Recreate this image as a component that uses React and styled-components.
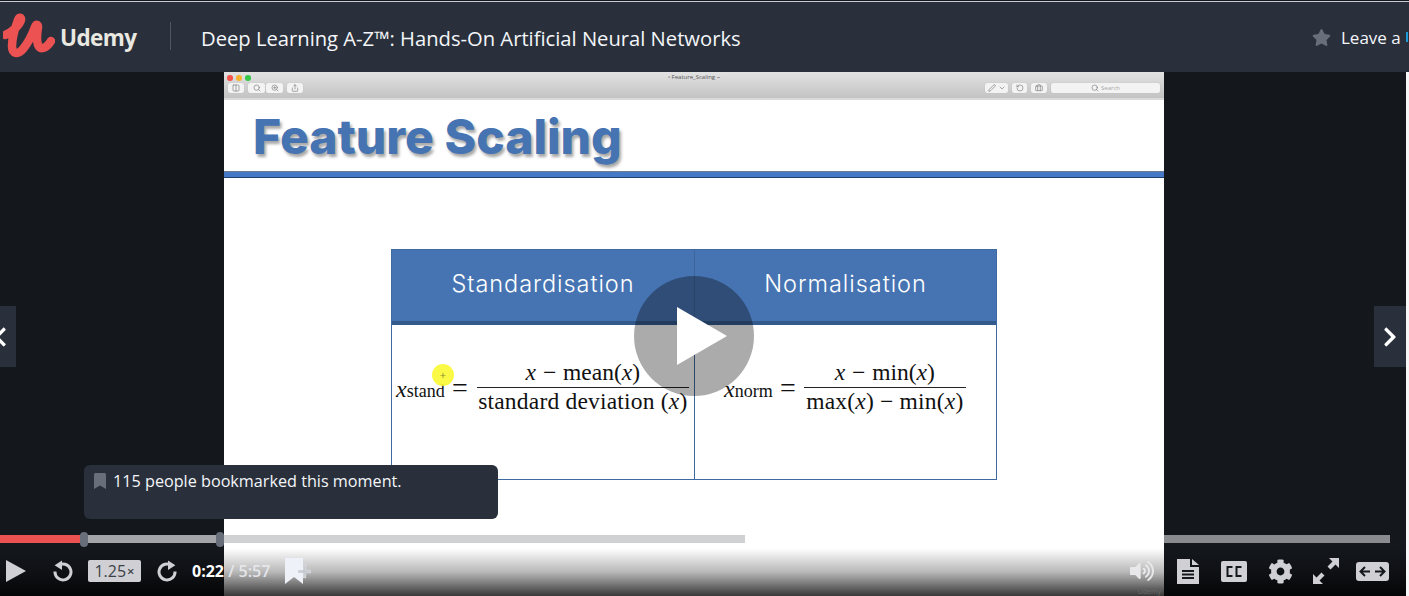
import React from 'react';
import styled, { createGlobalStyle } from 'styled-components';
import { FaStar, FaChevronLeft, FaChevronRight, FaBookmark, FaCog, FaVolumeUp } from 'react-icons/fa';
import { Search, ZoomIn, Share, Pen, Columns2, Briefcase, RotateCcw, ChevronDown } from 'lucide-react';

const GlobalStyle = createGlobalStyle`
  html, body {
    margin: 0;
    padding: 0;
    width: 1409px;
    height: 596px;
    overflow: hidden;
    background: #14171c;
    font-family: "Open Sans", "Liberation Sans", sans-serif;
  }
  * { box-sizing: border-box; }
`;

const Page = styled.div`
  width: 1409px;
  height: 596px;
  display: flex;
  flex-direction: column;
  overflow: hidden;
`;

const Header = styled.header`
  height: 72px;
  flex: none;
  background: #29303b;
  border-top: 1px solid #14171c;
  display: flex;
  flex-direction: column;
  overflow: hidden;
`;

const TopLine = styled.div`
  height: 1px;
  flex: none;
  background: #c8cad8;
`;

const HeaderRow = styled.div`
  flex: 1;
  display: flex;
  align-items: center;
  padding-left: 3px;
  padding-top: 2px;
  white-space: nowrap;
  > * { flex: none; }
`;

const LogoMark = styled.svg`
  margin-top: -4px;
`;

const LogoWord = styled.span`
  font-family: "Open Sans", sans-serif;
  font-weight: 700;
  font-size: 22.500px;
  letter-spacing: -0.6px;
  color: #e9e8e1;
  margin: -2px 0 0 5px;
  width: 110px;
`;

const Divider = styled.div`
  width: 1px;
  height: 28px;
  margin-top: -4px;
  background: #4f5662;
`;

const CourseTitle = styled.div`
  font-size: 20.200px;
  color: #f4f6fa;
  margin-left: 30px;
  width: 1111px;
`;

const Rate = styled.div`
  display: flex;
  align-items: center;
  font-size: 17px;
  color: #f4f6fa;
  gap: 10px;
  margin-top: -2px;
  svg { color: #686f7a; width: 19px; height: 19px; }
`;

const RateEdge = styled.span`
  width: 2px;
  height: 10px;
  margin-left: -5px;
  background: #1d9ad6;
`;

const Stage = styled.main`
  position: relative;
  flex: 1;
  display: flex;
  min-height: 0;
`;

const Video = styled.div`
  flex: 1;
  background: #14171c;
  padding-left: 224px;
`;

const EdgeStrip = styled.div`
  width: 3px;
  background: #f6f7f6;
`;

const Slide = styled.section`
  width: 940px;
  height: 100%;
  background: #fff;
  display: flex;
  flex-direction: column;
`;

const MacBar = styled.div`
  height: 28px;
  flex: none;
  background: linear-gradient(#e2e2e2, #c3c3c3);
  border-bottom: 2px solid #dadada;
  position: relative;
  display: flex;
  align-items: flex-end;
  justify-content: space-between;
  padding: 0 4px 5px 4px;
`;

const Lights = styled.div`
  position: absolute;
  left: 3px;
  top: 3px;
  display: flex;
  gap: 3.500px;
`;

const Light = styled.span`
  width: 5.500px;
  height: 5.500px;
  border-radius: 50%;
  background: ${p => p.$color};
`;

const MacTitle = styled.div`
  position: absolute;
  left: 0;
  right: 0;
  top: 1px;
  text-align: center;
  font-size: 6px;
  line-height: 8px;
  color: #555;
`;

const MacGroup = styled.div`
  display: flex;
`;

const MacButton = styled.div`
  width: ${p => p.$w}px;
  height: 10px;
  margin-left: ${p => p.$gap || 0}px;
  background: #f3f3f3;
  border-radius: 2px;
  box-shadow: 0 0 1px #aaa;
  display: flex;
  align-items: center;
  justify-content: center;
  gap: 2px;
  font-size: 6px;
  color: #a6a6a6;
  svg { width: 8px; height: 8px; color: #7d7d7d; }
`;

const SlideHead = styled.div`
  height: 78px;
  flex: none;
  padding-left: 29px;
  display: flex;
  align-items: center;
  border-bottom: 6px solid #4579c6;
  position: relative;
  &::before {
    content: '';
    position: absolute;
    left: 0; right: 0; bottom: 0;
    height: 1px;
    background: #6d7c92;
  }
  &::after {
    content: '';
    position: absolute;
    left: 0; right: 0; bottom: -6px;
    height: 1px;
    background: #1f3f72;
  }
`;

const SlideTitle = styled.h1`
  margin: 0;
  font-family: Inter, "Open Sans", sans-serif;
  font-weight: 800;
  font-size: 48px;
  color: #4674b2;
  text-shadow: 2px 3px 3px rgba(0, 0, 0, 0.35);
`;

const SlideBody = styled.div`
  padding: 71px 0 0 167px;
`;

const Table = styled.div`
  width: 606px;
  height: 231px;
  display: grid;
  grid-template-columns: 302px 302px;
  grid-template-rows: 75px 154px;
  border: 1px solid #3f6a9f;
`;

const HeadCell = styled.div`
  background: #4674b2;
  border-bottom: 4px solid #335a8c;
  border-left: ${p => (p.$divided ? '1px solid #3c6699' : 'none')};
  color: #fff;
  font-family: Inter, "Open Sans", sans-serif;
  font-weight: 300;
  font-size: 23.500px;
  letter-spacing: 0.95px;
  display: flex;
  align-items: center;
  justify-content: center;
  padding-bottom: 4px;
`;

const FormulaCell = styled.div`
  border-left: ${p => (p.$divided ? '1px solid #3f6a9f' : 'none')};
  display: flex;
  align-items: flex-start;
  padding: 34px 0 0 ${p => p.$pad}px;
  font-family: "Liberation Serif", serif;
  font-size: 23.500px;
  color: #111;
  white-space: nowrap;
`;

const Lhs = styled.div`
  display: flex;
  align-items: baseline;
  padding-top: 17px;
  width: ${p => p.$w}px;
  i { font-size: 24px; }
  sub { font-size: 18px; vertical-align: -5px; line-height: 0; }
`;

const Equals = styled.span`
  font-size: 28px;
  line-height: 28px;
  margin: 15px ${p => p.$after}px 0 ${p => p.$before}px;
`;

const Fraction = styled.div`
  display: flex;
  flex-direction: column;
  align-items: center;
  width: ${p => p.$w}px;
  line-height: 27px;
`;

const Numerator = styled.div`
  border-bottom: 1px solid #222;
  width: 100%;
  text-align: center;
  height: 29px;
  word-spacing: 1px;
`;

const Denominator = styled.div`
  letter-spacing: 0.2px;
`;

const CursorSpot = styled.div`
  position: absolute;
  left: 432px;
  top: 292px;
  width: 22px;
  height: 22px;
  border-radius: 50%;
  background: rgba(250, 250, 50, 0.9);
  color: #8a8a30;
  font-size: 11px;
  line-height: 21px;
  text-align: center;
`;

const BigPlay = styled.div`
  position: absolute;
  left: 634px;
  top: 204px;
  width: 120px;
  height: 120px;
  border-radius: 50%;
  background: rgba(0, 0, 0, 0.33);
  display: flex;
  align-items: center;
  justify-content: center;
  svg { width: 50px; height: 58px; margin-left: 16px; }
`;

const NavButton = styled.div`
  position: absolute;
  top: 234px;
  ${p => (p.$side === 'left' ? 'left: -16px;' : 'right: 3px;')}
  width: 32px;
  height: 61px;
  background: #29303b;
  color: #fff;
  display: flex;
  align-items: center;
  justify-content: center;
  svg { width: 18px; height: 22px; }
`;

const BookmarkTip = styled.div`
  position: absolute;
  left: 84px;
  top: 393px;
  width: 414px;
  height: 54px;
  background: #29303b;
  border-radius: 6px;
  padding: 5px 10px;
  display: flex;
  align-items: flex-start;
  gap: 7px;
  color: #f4f6fa;
  font-size: 16.200px;
  line-height: 22px;
  svg { width: 12px; height: 16px; color: #686f7a; margin-top: 3px; flex: none; }
`;

const Shade = styled.div`
  position: absolute;
  left: 0;
  right: 3px;
  bottom: 0;
  height: 48px;
  background: linear-gradient(rgba(0, 0, 0, 0), rgba(0, 0, 0, 0.28) 50%, rgba(0, 0, 0, 0.78));
`;

const Track = styled.div`
  position: absolute;
  left: 0;
  top: 463px;
  width: 1390px;
  height: 8px;
  background: rgba(255, 255, 255, 0.5);
`;

const Loaded = styled.div`
  position: absolute;
  left: 0;
  top: 0;
  height: 100%;
  background: rgba(179, 181, 184, 0.62);
`;

const Played = styled.div`
  position: absolute;
  left: 0;
  top: 0;
  height: 100%;
  background: #ec5252;
`;

const Handle = styled.div`
  position: absolute;
  top: -3px;
  width: 8px;
  height: 15px;
  margin-left: -4px;
  border-radius: 4px;
  background: #686f7a;
`;

const Controls = styled.div`
  position: absolute;
  left: 0;
  right: 3px;
  bottom: 0;
  height: 50px;
  display: flex;
  align-items: center;
  justify-content: space-between;
  padding: 0 11px 0 6px;
  color: #d0d0d4;
`;

const ControlGroup = styled.div`
  display: flex;
  align-items: center;
`;

const Slot = styled.div`
  width: 46px;
  margin-left: ${p => p.$gap || 0}px;
  display: flex;
  justify-content: center;
  align-items: center;
  color: ${p => p.$color || 'inherit'};
`;

const SpeedBox = styled.div`
  width: 53px;
  height: 22px;
  margin: 0 3px 0 2px;
  border-radius: 2px;
  background: #d0d0d4;
  color: #3b4048;
  font-size: 16px;
  display: flex;
  align-items: center;
  justify-content: center;
  gap: 1px;
  small { font-size: 13px; font-weight: 600; }
`;

const Time = styled.div`
  font-size: 16px;
  font-weight: 600;
  color: #e4e6ea;
  width: 93px;
  margin-left: 2px;
  white-space: nowrap;
  b { color: #fff; font-weight: 700; }
`;

const Watermark = styled.div`
  position: absolute;
  right: 248px;
  bottom: 0;
  font-size: 7px;
  line-height: 9px;
  color: #6a6a6a;
`;

const ReplayIcon = ({ flip }) => (
  <svg width="22" height="22" viewBox="0 0 22 22" style={flip ? { transform: 'scaleX(-1)' } : undefined}>
    <path d="M6.200 5.600A8 8 0 1 1 3 11.500" fill="none" stroke="#d0d0d4" strokeWidth="3" />
    <path d="M10 0.500v9.500L2.600 5.200z" fill="#d0d0d4" />
  </svg>
);

const Logo = () => (
  <LogoMark width="52" height="46" viewBox="0 0 52 46">
    <path
      d="M2 22C8 20 17 12 18 7c.5-3-2-3-3 0C12 15 9 26 9 33c0 8 6 9 11 3 5-6 9-14 12-22 1-3 3-3 3 0-1 6-2 12 0 18 2 5 8 4 13-4"
      fill="none"
      stroke="#ec5252"
      strokeWidth="8.500"
      strokeLinecap="round"
      strokeLinejoin="round"
    />
  </LogoMark>
);

const Formula = ({ sub, pad, lhs, before, after, top, bottom, width, divided }) => (
  <FormulaCell $pad={pad} $divided={divided}>
    <Lhs $w={lhs}><i>x</i><sub>{sub}</sub></Lhs>
    <Equals $before={before} $after={after}>=</Equals>
    <Fraction $w={width}>
      <Numerator>{top}</Numerator>
      <Denominator>{bottom}</Denominator>
    </Fraction>
  </FormulaCell>
);

export default function App() {
  return (
    <Page>
      <GlobalStyle />
      <Header>
        <TopLine />
        <HeaderRow>
          <Logo />
          <LogoWord>Udemy</LogoWord>
          <Divider />
          <CourseTitle>Deep Learning A-Z™: Hands-On Artificial Neural Networks</CourseTitle>
          <Rate><FaStar />Leave a<RateEdge /></Rate>
        </HeaderRow>
      </Header>

      <Stage>
        <Video>
          <Slide>
            <MacBar>
              <Lights>
                <Light $color="#f4544c" />
                <Light $color="#f5b331" />
                <Light $color="#37c84a" />
              </Lights>
              <MacTitle>▫ Feature_Scaling ~</MacTitle>
              <MacGroup>
                <MacButton $w={16}><Columns2 /></MacButton>
                <MacButton $w={17} $gap={4}><Search /></MacButton>
                <MacButton $w={17} $gap={1}><ZoomIn /></MacButton>
                <MacButton $w={16} $gap={4}><Share /></MacButton>
              </MacGroup>
              <MacGroup>
                <MacButton $w={23}><Pen /><ChevronDown /></MacButton>
                <MacButton $w={15} $gap={4}><RotateCcw /></MacButton>
                <MacButton $w={16} $gap={4}><Briefcase /></MacButton>
                <MacButton $w={109} $gap={4}><Search />Search</MacButton>
              </MacGroup>
            </MacBar>
            <SlideHead>
              <SlideTitle>Feature Scaling</SlideTitle>
            </SlideHead>
            <SlideBody>
              <Table>
                <HeadCell>Standardisation</HeadCell>
                <HeadCell $divided>Normalisation</HeadCell>
                <Formula
                  sub="stand"
                  pad={4}
                  lhs={50}
                  before={6}
                  after={9}
                  width={212}
                  top={<><i>x</i> − mean(<i>x</i>)</>}
                  bottom={<>standard deviation (<i>x</i>)</>}
                />
                <Formula
                  divided
                  sub="norm"
                  pad={29}
                  lhs={47}
                  before={9}
                  after={8}
                  width={162}
                  top={<><i>x</i> − min(<i>x</i>)</>}
                  bottom={<>max(<i>x</i>) − min(<i>x</i>)</>}
                />
              </Table>
            </SlideBody>
          </Slide>
        </Video>
        <EdgeStrip />

        <CursorSpot>+</CursorSpot>
        <BigPlay>
          <svg viewBox="0 0 50 58"><path d="M0 0L50 29L0 58z" fill="#fff" /></svg>
        </BigPlay>
        <NavButton $side="left"><FaChevronLeft /></NavButton>
        <NavButton $side="right"><FaChevronRight /></NavButton>

        <BookmarkTip>
          <FaBookmark />
          <span>115 people bookmarked this moment.</span>
        </BookmarkTip>

        <Shade />
        <Track>
          <Loaded style={{ width: 745 }} />
          <Played style={{ width: 84 }} />
          <Handle style={{ left: 84 }} />
          <Handle style={{ left: 220 }} />
        </Track>

        <Controls>
          <ControlGroup>
            <svg width="20" height="22" viewBox="0 0 20 22"><path d="M0 0L20 11L0 22z" fill="#d0d0d4" /></svg>
            <Slot $gap={14}><ReplayIcon /></Slot>
            <SpeedBox>1.25<small>×</small></SpeedBox>
            <Slot><ReplayIcon flip /></Slot>
            <Time><b>0:22</b> / 5:57</Time>
            <svg width="26" height="28" viewBox="0 0 26 28">
              <path d="M0 1h18v26l-9-7-9 7z" fill="#eef1f8" />
              <path d="M18 8h3v5h5v3h-5v5h-3v-5h-5v-3h5z" fill="#c8ccd2" stroke="#fff" strokeOpacity="0.25" />
            </svg>
          </ControlGroup>
          <ControlGroup>
            <Slot $color="#e8e8ea"><FaVolumeUp size={24} /></Slot>
            <Slot>
              <svg width="22" height="25" viewBox="0 0 22 25">
                <path d="M0 0h13v8h9v17H0z" fill="#d0d0d4" />
                <path d="M15 0l7 6h-7z" fill="#d0d0d4" />
                <path d="M5 12h12M5 15.500h12M5 19h12" stroke="#14171c" strokeWidth="1.800" />
              </svg>
            </Slot>
            <Slot>
              <svg width="26" height="21" viewBox="0 0 26 21">
                <rect width="26" height="21" rx="2" fill="#d0d0d4" />
                <path d="M11.500 6H6.500v9h5M20.500 6h-5v9h5" fill="none" stroke="#14171c" strokeWidth="2" />
              </svg>
            </Slot>
            <Slot><FaCog size={25} /></Slot>
            <Slot>
              <svg width="26" height="26" viewBox="0 0 26 26">
                <path d="M16 0h10v10l-3.500-3.500-5 5-3-3 5-5zM0 26V16l3.500 3.500 5-5 3 3-5 5L10 26z" fill="#d0d0d4" />
              </svg>
            </Slot>
            <Slot>
              <svg width="33" height="19" viewBox="0 0 33 19">
                <rect width="33" height="19" rx="3" fill="#d0d0d4" />
                <path d="M14 9.500H5M9 5L4.500 9.500 9 14M19 9.500h9M24 5l4.500 4.500L24 14" fill="none" stroke="#14171c" strokeWidth="2" />
              </svg>
            </Slot>
          </ControlGroup>
        </Controls>
        <Watermark>Udemy</Watermark>
      </Stage>
    </Page>
  );
}
